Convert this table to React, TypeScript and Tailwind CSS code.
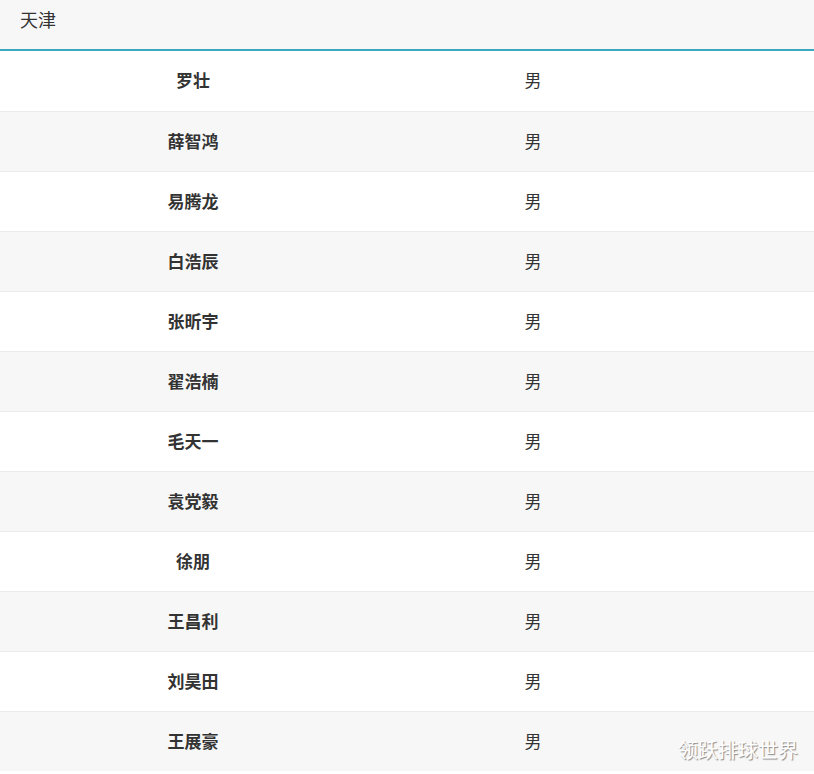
import React from "react";

const players = [
  "罗壮",
  "薛智鸿",
  "易腾龙",
  "白浩辰",
  "张昕宇",
  "翟浩楠",
  "毛天一",
  "袁党毅",
  "徐朋",
  "王昌利",
  "刘昊田",
  "王展豪",
];

export default function App() {
  return (
    <div
      className="relative w-[814px] h-[774px] overflow-hidden bg-white text-[#333]"
      style={{ fontFamily: '"Noto Sans CJK SC", "Noto Sans", sans-serif' }}
    >
      <div className="h-[51px] bg-[#f7f7f7] border-b-2 border-[#3aa8c1] flex items-center pl-5 pb-[11px] text-[18px]">
        天津
      </div>
      <div>
        {players.map((name, i) => (
          <div
            key={name}
            className={`h-[60px] flex items-center pb-[2px] border-t border-[#eaeaea] first:border-t-0 ${
              i % 2 === 1 ? "bg-[#f7f7f7]" : "bg-white"
            }`}
          >
            <div className="w-[386px] text-center font-bold text-[17px]">{name}</div>
            <div className="w-[294px] text-center text-[17px]">男</div>
          </div>
        ))}
      </div>
      <div
        className="absolute left-[678px] top-[735px] text-[20px] text-white"
        style={{ textShadow: "1px 1px 1px #888" }}
      >
        领跃排球世界
      </div>
    </div>
  );
}
